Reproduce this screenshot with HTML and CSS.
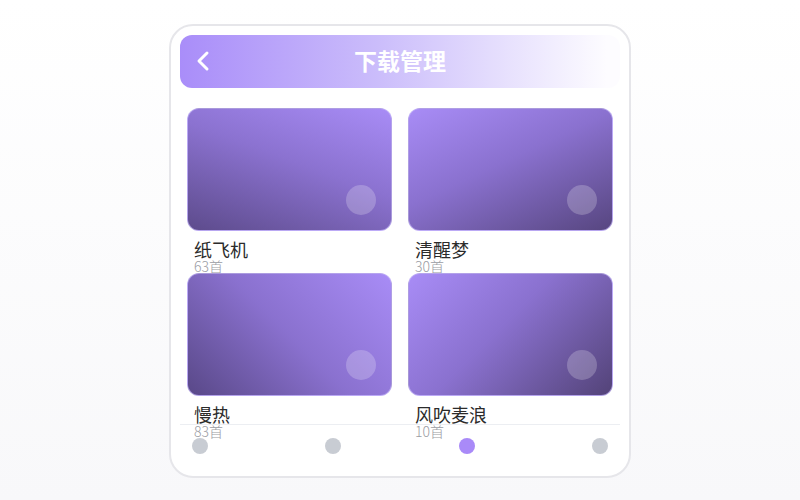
FILE: index.html
```html
<!DOCTYPE html>
<html lang="zh-CN">
<head>
  <meta charset="UTF-8" />
  <meta name="viewport" content="width=device-width, initial-scale=1.0"/>
  <title>下载管理</title>
  <link rel="stylesheet" href="styles.css">
</head>
<body>
  <div class="phone">
    <div class="header">
      <button class="back">
        <svg width="14" height="22" viewBox="0 0 14 22">
          <path d="M11 3 L3 11 L11 19" fill="none" stroke="#fff" stroke-width="3" stroke-linecap="round" stroke-linejoin="round"/>
        </svg>
      </button>
      <h2>下载管理</h2>
    </div>

    <div class="main">
      <div class="grid">
        <div class="item">
          <div class="cover cover-a"><span class="play"></span></div>
          <div class="name">纸飞机</div>
          <div class="count">63首</div>
        </div>
        <div class="item">
          <div class="cover cover-b"><span class="play"></span></div>
          <div class="name">清醒梦</div>
          <div class="count">30首</div>
        </div>
        <div class="item">
          <div class="cover cover-c"><span class="play"></span></div>
          <div class="name">慢热</div>
          <div class="count">83首</div>
        </div>
        <div class="item">
          <div class="cover cover-d"><span class="play"></span></div>
          <div class="name">风吹麦浪</div>
          <div class="count">10首</div>
        </div>
      </div>
    </div>

    <div class="nav">
      <span class="dot"></span>
      <span class="dot"></span>
      <span class="dot active"></span>
      <span class="dot"></span>
    </div>
  </div>
</body>
</html>
```

FILE: styles.css
```css
body {
  margin: 0;
  height: 100vh;
  display: flex;
  justify-content: center;
  align-items: center;
  background: linear-gradient(#ffffff, #f8f8fa);
  font-family: "Noto Sans CJK SC", "Noto Sans", sans-serif;
  color: #333;
}

.phone {
  box-sizing: border-box;
  width: 462px;
  height: 454px;
  margin-top: 2px;
  padding: 9px 9px;
  border: 2px solid #e6e6ea;
  border-radius: 24px;
  background: #fff;
  display: flex;
  flex-direction: column;
}

.header {
  position: relative;
  height: 53px;
  flex-shrink: 0;
  border-radius: 12px;
  background: linear-gradient(to right, #a98df9, #cbbdfb 45%, #fdfcff 97%);
  display: flex;
  align-items: center;
  justify-content: center;
}

.header h2 {
  margin: 0 0 3px;
  color: #fff;
  font-size: 23px;
  line-height: 30px;
  font-weight: 700;
}

.back {
  position: absolute;
  left: 16px;
  top: 15px;
  padding: 0;
  border: none;
  background: none;
  display: flex;
}

.main {
  height: 336px;
  flex-shrink: 0;
  padding: 20px 7px 0;
  box-sizing: border-box;
}

.grid {
  display: grid;
  grid-template-columns: 205px 205px;
  column-gap: 16px;
}

.item {
  height: 165px;
}

.cover {
  position: relative;
  height: 123px;
  box-sizing: border-box;
  border-radius: 12px;
  border: 1px solid rgba(200, 185, 250, 0.7);
}

.cover-a { background: linear-gradient(200deg, #a88cf6, #8b72d0 45%, #5d4b8c); }
.cover-b { background: linear-gradient(155deg, #a88cf6, #8a71cf 45%, #574680); }
.cover-c { background: linear-gradient(225deg, #a88cf6, #8a71cf 50%, #594888); }
.cover-d { background: linear-gradient(135deg, #a88cf6, #8a71cf 45%, #534378); }

.play {
  position: absolute;
  right: 15px;
  bottom: 15px;
  width: 30px;
  height: 30px;
  border-radius: 50%;
  background: rgba(255, 255, 255, 0.22);
}

.name {
  margin-top: 9px;
  padding-left: 7px;
  font-size: 18px;
  line-height: 19px;
  color: #2b2b2b;
}

.count {
  padding-left: 7px;
  font-size: 14px;
  line-height: 14px;
  font-weight: 300;
  color: #9a9ca3;
}

.nav {
  border-top: 1px solid #eceef2;
  padding: 13px 12px 0;
  display: flex;
  justify-content: space-between;
}

.dot {
  width: 16px;
  height: 16px;
  border-radius: 50%;
  background: #c8ccd3;
}

.dot.active {
  background: #a98af8;
}
```
